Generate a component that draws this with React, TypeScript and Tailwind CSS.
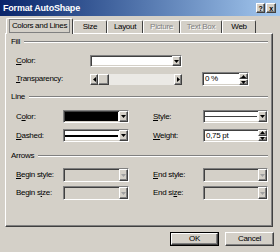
import React from "react";

const sunken =
  "border border-t-[#808080] border-l-[#808080] border-b-white border-r-white shadow-[inset_1px_1px_0_#404040,inset_-1px_-1px_0_#d4d0c8]";
const raised =
  "border border-t-white border-l-white border-b-[#404040] border-r-[#404040] shadow-[inset_-1px_-1px_0_#808080]";

function Arrow({ dir = "down", gray = false }: { dir?: "down" | "up" | "left" | "right"; gray?: boolean }) {
  const fill = gray ? "#a0a0a0" : "#000";
  const pts = {
    down: "0,0 5,0 2.5,3",
    up: "0,3 5,3 2.5,0",
    left: "3,0 3,5 0,2.5",
    right: "0,0 0,5 3,2.5",
  }[dir];
  const horiz = dir === "left" || dir === "right";
  return (
    <svg width={horiz ? 3 : 5} height={horiz ? 5 : 3} viewBox={horiz ? "0 0 3 5" : "0 0 5 3"}>
      <polygon points={pts} fill={fill} />
    </svg>
  );
}

function Combo({
  w,
  disabled = false,
  children,
}: {
  w: string;
  disabled?: boolean;
  children?: React.ReactNode;
}) {
  return (
    <div className={`${w} h-full flex ${sunken} ${disabled ? "bg-[#d4d0c8]" : "bg-white"}`}>
      <div className="flex-1 flex items-center p-[1px]">{children}</div>
      <div className={`w-[9px] bg-[#d4d0c8] flex items-center justify-center ${raised}`}>
        <Arrow gray={disabled} />
      </div>
    </div>
  );
}

function Spin({ w, value }: { w: string; value: string }) {
  return (
    <div className={`${w} h-full flex bg-white ${sunken}`}>
      <div className="flex-1 flex items-center pl-[2px] leading-none">{value}</div>
      <div className="w-[9px] flex flex-col">
        <div className={`flex-1 bg-[#d4d0c8] flex items-center justify-center ${raised}`}>
          <Arrow dir="up" />
        </div>
        <div className={`flex-1 bg-[#d4d0c8] flex items-center justify-center ${raised}`}>
          <Arrow dir="down" />
        </div>
      </div>
    </div>
  );
}

function Header({ label, mt }: { label: string; mt: string }) {
  return (
    <div className={`${mt} h-[10px] flex items-center ml-[5px] mr-[4px] gap-[4px]`}>
      <span className="leading-none">{label}</span>
      <div className="flex-1 h-[2px] border-t border-t-[#808080] border-b border-b-white" />
    </div>
  );
}

function Label({ text, u, w }: { text: string; u: number; w: string }) {
  return (
    <span className={`${w} leading-none shrink-0`}>
      {text.slice(0, u)}
      <span className="underline underline-offset-1">{text[u]}</span>
      {text.slice(u + 1)}
    </span>
  );
}

const tabs = [
  { name: "Colors and Lines", w: "w-[67px]", active: true },
  { name: "Size", w: "w-[34px]" },
  { name: "Layout", w: "w-[36px]" },
  { name: "Picture", w: "w-[37px]", disabled: true },
  { name: "Text Box", w: "w-[42px]", disabled: true },
  { name: "Web", w: "w-[34px]" },
];

export default function App() {
  return (
    <div className="w-[280px] h-[252px] bg-[#d4d0c8] flex flex-col overflow-hidden text-[8px] tracking-[-0.3px] text-black font-['Liberation_Sans',Arial,sans-serif]">
      {/* Title bar */}
      <div className="h-[16px] flex items-center pl-[3px] pr-[4px] bg-gradient-to-r from-[#0a246a] to-[#a6caf0]">
        <span className="flex-1 text-white font-bold text-[9px] tracking-[-0.2px] leading-none">Format AutoShape</span>
        <div className="flex gap-[1px]">
          <div className={`w-[9px] h-[10px] bg-[#d4d0c8] ${raised} flex items-center justify-center text-[7px] font-bold leading-none`}>?</div>
          <div className={`w-[10px] h-[10px] bg-[#d4d0c8] ${raised} flex items-center justify-center text-[7px] font-bold leading-none`}>x</div>
        </div>
      </div>

      {/* Tabs */}
      <div className="h-[17px] flex items-end pl-[6px]">
        {tabs.map((t) => (
          <div
            key={t.name}
            className={`${t.w} flex items-center justify-center border-l border-t border-r border-l-white border-t-white border-r-[#404040] rounded-t-[2px] leading-none ${
              t.active ? "h-[16px] -mb-[1px] relative z-10 bg-[#d4d0c8]" : "h-[13px]"
            } ${t.disabled ? "text-[#808080] [text-shadow:1px_1px_0_#fff]" : ""}`}
          >
            {t.active ? (
              <span className="border border-[#808080] px-[2px] py-[2px] mb-[2px]">{t.name}</span>
            ) : (
              t.name
            )}
          </div>
        ))}
      </div>

      {/* Panel */}
      <div className="ml-[5px] w-[268px] h-[194px] flex flex-col border border-t-white border-l-white border-b-[#404040] border-r-[#404040] shadow-[inset_-1px_-1px_0_#808080]">
        <Header label="Fill" mt="mt-[3px]" />

        <div className="mt-[8px] h-[12px] flex items-center ml-[10px]">
          <Label text="Color:" u={0} w="w-[74px]" />
          <Combo w="w-[92px]" />
        </div>

        <div className="mt-[5px] h-[14px] flex items-center ml-[10px]">
          <Label text="Transparency:" u={0} w="w-[74px]" />
          <div className="w-[92px] h-[11px] flex bg-[#ebe9e5]">
            <div className={`w-[8px] bg-[#d4d0c8] flex items-center justify-center ${raised}`}>
              <Arrow dir="left" />
            </div>
            <div className={`w-[11px] bg-[#d4d0c8] ${raised}`} />
            <div className="flex-1" />
            <div className={`w-[8px] bg-[#d4d0c8] flex items-center justify-center ${raised}`}>
              <Arrow dir="right" />
            </div>
          </div>
          <div className="ml-[20px] h-full">
            <Spin w="w-[47px]" value="0 %" />
          </div>
        </div>

        <Header label="Line" mt="mt-[6px]" />

        <div className="mt-[8px] h-[13px] flex items-center ml-[10px]">
          <Label text="Color:" u={1} w="w-[47px]" />
          <Combo w="w-[66px]">
            <div className="w-full h-full bg-black" />
          </Combo>
          <Label text="Style:" u={0} w="w-[50px] ml-[24px]" />
          <Combo w="w-[65px]">
            <div className="w-full h-[1px] bg-[#404040]" />
          </Combo>
        </div>

        <div className="mt-[6px] h-[13px] flex items-center ml-[10px]">
          <Label text="Dashed:" u={0} w="w-[47px]" />
          <Combo w="w-[66px]">
            <div className="w-full h-[2px] bg-black" />
          </Combo>
          <Label text="Weight:" u={0} w="w-[50px] ml-[24px]" />
          <div className="h-full">
            <Spin w="w-[65px]" value="0,75 pt" />
          </div>
        </div>

        <Header label="Arrows" mt="mt-[9px]" />

        <div className="mt-[7px] h-[14px] flex items-center ml-[10px]">
          <Label text="Begin style:" u={0} w="w-[47px]" />
          <Combo w="w-[66px]" disabled />
          <Label text="End style:" u={0} w="w-[50px] ml-[24px]" />
          <Combo w="w-[65px]" disabled />
        </div>

        <div className="mt-[4px] h-[14px] flex items-center ml-[10px]">
          <Label text="Begin size:" u={7} w="w-[47px]" />
          <Combo w="w-[66px]" disabled />
          <Label text="End size:" u={6} w="w-[50px] ml-[24px]" />
          <Combo w="w-[65px]" disabled />
        </div>
      </div>

      {/* Buttons */}
      <div className="mt-[5px] flex justify-end gap-[6px] pr-[6px]">
        <div className="w-[49px] h-[14px] border border-black">
          <div className={`w-full h-full bg-[#d4d0c8] flex items-center justify-center leading-none ${raised}`}>OK</div>
        </div>
        <div className={`w-[49px] h-[14px] bg-[#d4d0c8] flex items-center justify-center leading-none ${raised}`}>
          Cancel
        </div>
      </div>
    </div>
  );
}
